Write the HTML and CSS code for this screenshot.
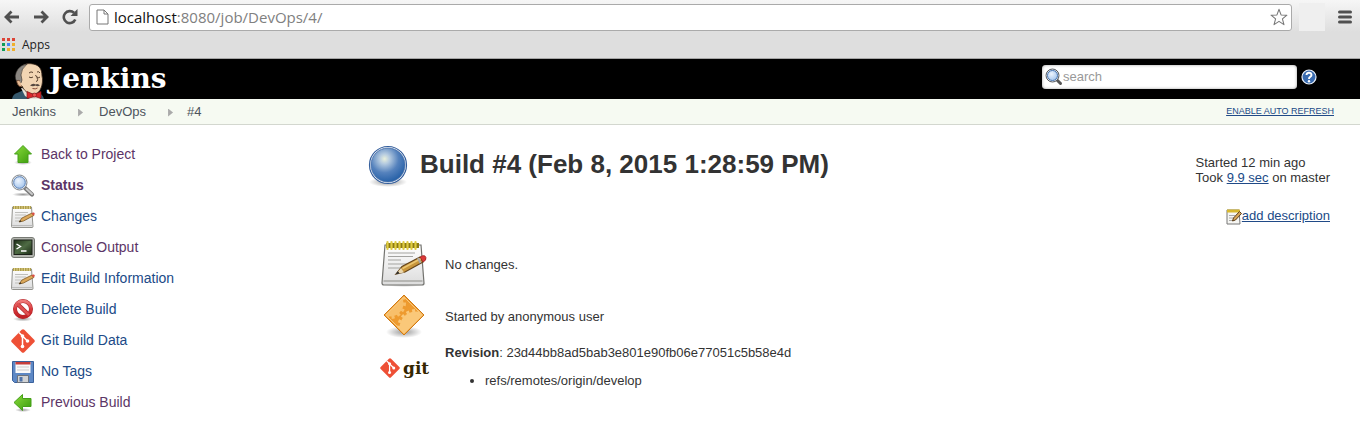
FILE: index.html
```html
<!DOCTYPE html>
<html lang="en">
<head>
<meta charset="utf-8">
<title>DevOps #4 [Jenkins]</title>
<link rel="stylesheet" href="styles.css">
</head>
<body>
<svg class="defs" aria-hidden="true">
  <defs>
    <linearGradient id="paper" x1="0" y1="0" x2="0" y2="1"><stop offset="0" stop-color="#fff"/><stop offset="1" stop-color="#dcdcdc"/></linearGradient>
    <linearGradient id="green" x1="0" y1="0" x2="1" y2="1"><stop offset="0" stop-color="#8bdc3c"/><stop offset="1" stop-color="#3a9a0c"/></linearGradient>
    <linearGradient id="red" x1="0" y1="0" x2="0" y2="1"><stop offset="0" stop-color="#ef7b7b"/><stop offset=".5" stop-color="#d83a3c"/><stop offset="1" stop-color="#c02026"/></linearGradient>
    <linearGradient id="screen" x1="0" y1="0" x2="1" y2="1"><stop offset="0" stop-color="#1f3018"/><stop offset=".5" stop-color="#4e6b44"/><stop offset="1" stop-color="#1c2c16"/></linearGradient>
    <linearGradient id="orange" x1="0" y1="0" x2="1" y2="1"><stop offset="0" stop-color="#ec9626"/><stop offset="1" stop-color="#f0a03a"/></linearGradient>
    <radialGradient id="ball" cx=".4" cy=".32" r=".68"><stop offset="0" stop-color="#e9f0dc"/><stop offset=".22" stop-color="#b4cae0"/><stop offset=".6" stop-color="#5582bd"/><stop offset="1" stop-color="#2862a8"/></radialGradient>
    <radialGradient id="glass" cx=".4" cy=".35" r=".7"><stop offset="0" stop-color="#eef5fe"/><stop offset="1" stop-color="#a3c4ec"/></radialGradient>
    <radialGradient id="shade"><stop offset="0" stop-color="#000" stop-opacity=".4"/><stop offset="1" stop-color="#000" stop-opacity="0"/></radialGradient>
    <clipPath id="diamond"><path d="M24 4l19 19-19 19L5 23z"/></clipPath>
    <symbol id="notepad" viewBox="0 0 48 48">
      <ellipse cx="24" cy="44" rx="23" ry="3" fill="url(#shade)"/>
      <path d="M5 5h36l3 38q0 2-2 2H4q-2 0-2-2z" fill="url(#paper)" stroke="#73736f" stroke-width="1.2"/>
      <path d="M3.500 41h39" stroke="#b6b6b3" stroke-width="2"/>
      <path d="M8 13h27M8 16.500h25M8 20h13M8 24h24M8 28h18" stroke="#a3a3a0" stroke-width="1.200"/>
      <path d="M6 5.500h33" stroke="#8c7a14" stroke-width="5"/>
      <path d="M7.500 2v7M11.500 2v7M15.500 2v7M19.500 2v7M23.500 2v7M27.500 2v7M31.500 2v7M35.500 2v7" stroke="#dfcc42" stroke-width="2.200" stroke-linecap="round"/>
      <path d="M16 34l6-7.500L40 17l3 5-18 10z" fill="#c9963c" stroke="#65441a" stroke-width="1.200"/>
      <path d="M22.500 28.500L41 18.500" stroke="#ecc670" stroke-width="1.500"/>
      <path d="M16 34l5-6 3 4.500z" fill="#ead7ae"/><path d="M15.500 34.300l2.500-3 1.500 2.300z" fill="#222"/>
      <path d="M40 17l2.500-1.300q3-.7 3.500 2t-3 4.300z" fill="#dd3939" stroke="#972020" stroke-width=".7"/>
      <path d="M38 18l2.500 5" stroke="#aaa" stroke-width="2"/>
    </symbol>
    <symbol id="notepad-small" viewBox="0 0 24 24">
      <path d="M1.500 2h19l1.500 19.500q0 1-1 1H1.500q-1 0-1-1z" fill="url(#paper)" stroke="#92928d"/>
      <path d="M1 20.500h20.500" stroke="#bbb"/>
      <path d="M4 7.500h13M4 10h11M4 13h7M4 16h6" stroke="#bfbfbb"/>
      <path d="M2 2.500h18" stroke="#ae9d4b" stroke-width="3"/>
      <path d="M3.500 1v3M6 1v3M8.500 1v3M11 1v3M13.500 1v3M16 1v3M18.500 1v3" stroke="#ddd08c"/>
      <path d="M8 17l3-4 10-5 1.800 2.500L12.500 16z" fill="#dca95b" stroke="#7e5620" stroke-width=".8"/>
      <path d="M20.500 8.200l1.500-.6q1.500-.3 1.700 1t-1.400 2z" fill="#d95047"/>
      <path d="M8 17l1.500-1.800.9 1.200z" fill="#222"/>
    </symbol>
    <symbol id="magnifier" viewBox="0 0 24 24">
      <ellipse cx="12" cy="20.500" rx="11" ry="2" fill="url(#shade)"/>
      <path d="M14 14l7 6.500" stroke="#777" stroke-width="4.200" stroke-linecap="round"/>
      <path d="M15.500 15l5.500 5" stroke="#c9c9c9" stroke-width="2" stroke-linecap="round"/>
      <circle cx="8.500" cy="8.500" r="7.500" fill="#e1e4e7" stroke="#83888e"/>
      <circle cx="8.500" cy="8.500" r="5.800" fill="url(#glass)" stroke="#5b83bb"/>
    </symbol>
    <symbol id="git-mark" viewBox="0 0 24 24">
      <path d="M10.700.8q1.300-1.200 2.600 0l9.900 9.900q1.200 1.300 0 2.600l-9.900 9.900q-1.300 1.200-2.600 0L.8 13.300q-1.200-1.300 0-2.600z" fill="#ee5036"/>
      <path d="M8 3.500l3.500 3.500v10.500M11.500 7l5 5" fill="none" stroke="#fff" stroke-width="1.500"/>
      <circle cx="11.500" cy="7" r="1.800" fill="#fff"/><circle cx="16.500" cy="12" r="1.800" fill="#fff"/><circle cx="11.500" cy="17.500" r="1.800" fill="#fff"/>
    </symbol>
  </defs>
</svg>

<div class="browser">
  <div class="toolbar">
    <button class="tool" aria-label="Back"><svg width="16" height="14" viewBox="0 0 16 14"><path d="M15 7H2.500M7.500 1.500L2 7l5.500 5.500" fill="none" stroke="#505050" stroke-width="2.800"/></svg></button>
    <button class="tool" aria-label="Forward"><svg width="16" height="14" viewBox="0 0 16 14"><path d="M1 7h12.500M8.500 1.500L14 7l-5.500 5.500" fill="none" stroke="#505050" stroke-width="2.800"/></svg></button>
    <button class="tool" aria-label="Reload"><svg width="16" height="16" viewBox="0 0 16 16"><path d="M13.300 10.500A6 6 0 1 1 12 3.800" fill="none" stroke="#505050" stroke-width="2.600"/><path d="M15.500 0v7h-7z" fill="#505050"/></svg></button>
    <label class="address">
      <svg width="13" height="16" viewBox="0 0 13 16"><path d="M1 1h7l4 4v10H1zM8 1v4h4" fill="#fff" stroke="#777"/></svg>
      <span class="url" role="textbox" aria-label="Address"><b>localhost</b>:8080/job/DevOps/4/</span>
      <svg width="18" height="18" viewBox="0 0 20 20"><path d="M10 1.500l2.300 6.200 6.500.3-5 4.100 1.700 6.400-5.500-3.600-5.500 3.600 1.700-6.400-5-4.100 6.500-.3z" fill="#fff" stroke="#777" stroke-width="1.200" stroke-linejoin="round"/></svg>
    </label>
    <span class="extension"></span>
    <button class="tool" aria-label="Menu"><svg width="14" height="14" viewBox="0 0 14 14"><path d="M1.500 2h11M1.500 7h11M1.500 12h11" stroke="#505050" stroke-width="3" stroke-linecap="round"/></svg></button>
  </div>
  <div class="bookmarks">
    <a class="apps" href="#apps">
      <svg width="14" height="14" viewBox="0 0 14 14"><path d="M0 0h3v3H0zM5 0h3v3H5zM10 0h3v3h-3z" fill="#dc4437"/><path d="M0 5h3v3H0zM0 10h3v3H0z" fill="#0f9d58"/><path d="M5 5h3v3H5z" fill="#4285f4"/><path d="M10 5h3v3h-3zM5 10h3v3H5zM10 10h3v3h-3z" fill="#efb02e"/></svg>
      Apps</a>
  </div>
</div>

<header class="header">
  <a class="logo" href="#home">
    <svg width="33" height="36" viewBox="0 0 33 36">
      <path d="M0 36q1-5 5-6l7-3 13 2q6 2 7 7z" fill="#35586c"/>
      <path d="M9 25l4 8 5 3h10l-1-5-4-4z" fill="#e9e2d8"/>
      <path d="M6 14C5 4 12 0 19 .7c8 .6 11 5 11 12.300 1 3 .5 9-1 12-1.500 4-4 6-8 6-6 0-9-4-11-8q-4-2-5-5z" fill="#f2d5b3" stroke="#39271b" stroke-width=".8"/>
      <path d="M5 19Q1 13 6 6q3-4 9-5-6 5-6 11l1 5-1 3q-2-3-4-1z" fill="#8a8681" stroke="#302c29" stroke-width=".6"/>
      <path d="M8 18q-4-2-3 2t5 4" fill="#e5b993" stroke="#57321c" stroke-width=".8"/>
      <path d="M17 10q2-2 4-.5M25 9q2-1 3 1M17 14q2 1.500 4 0M25 14q2 1.500 3 0M23.500 12q4 6 .5 6.500" fill="none" stroke="#453020" stroke-width=".9"/>
      <path d="M18 22.500q3-3 5.500-1 2.500-1.500 4.500 1-2.500 1.500-4.500 0-2.500 1.500-5.500 0z" fill="#544740"/>
      <path d="M20.500 25.500q3 1 5-.5" fill="none" stroke="#874a38"/>
      <path d="M15 28.500l7 3 7-3v7l-6-2-8 2z" fill="#d9282c" stroke="#7b1719" stroke-width=".7"/><circle cx="22.500" cy="32" r="2" fill="#ef5552" stroke="#7b1719" stroke-width=".6"/>
    </svg>
    <span class="wordmark">Jenkins</span>
  </a>
  <form class="search">
    <label class="search-box"><svg width="18" height="18" viewBox="0 0 18 18"><path d="M11 11l4.500 4.500" stroke="#555" stroke-width="3" stroke-linecap="round"/><circle cx="7.500" cy="7.500" r="6.500" fill="#dee3e8" stroke="#565b62"/><circle cx="7.500" cy="7.500" r="5" fill="url(#glass)" stroke="#4b78b5"/></svg><input type="search" placeholder="search" aria-label="Search"></label>
    <a class="help" href="#help" aria-label="Help"><svg width="16" height="16" viewBox="0 0 16 16"><circle cx="8" cy="8" r="7" fill="#396bb0" stroke="#e9f0fa" stroke-width="1.200"/><path d="M5.500 6q.2-2.300 2.500-2.300T10.500 6q0 1.200-1.300 1.900T8 10" fill="none" stroke="#fff" stroke-width="1.900"/><circle cx="8" cy="12.200" r="1.200" fill="#fff"/></svg></a>
  </form>
</header>

<nav class="crumbs" aria-label="Breadcrumb">
  <a href="#jenkins">Jenkins</a><i class="arrow"></i><a href="#devops">DevOps</a><i class="arrow"></i><a href="#build">#4</a>
  <a class="refresh" href="#refresh">ENABLE AUTO REFRESH</a>
</nav>

<div class="page">
  <nav class="tasks" aria-label="Build tasks">
    <a class="seen" href="#project"><svg viewBox="0 0 24 24"><ellipse cx="12" cy="19.500" rx="9" ry="2.500" fill="url(#shade)"/><path d="M12 2.500l8.500 8.500H17v8.500H7V11H3.500z" fill="url(#green)" stroke="#45a018"/></svg>Back to Project</a>
    <a class="seen current" href="#status"><svg><use href="#magnifier"/></svg>Status</a>
    <a href="#changes"><svg><use href="#notepad-small"/></svg>Changes</a>
    <a class="seen" href="#console"><svg viewBox="0 0 24 24"><rect x=".5" y="1.500" width="23" height="20" rx="2.500" fill="#b4b6b0" stroke="#777a74"/><rect x="3" y="4" width="18" height="14.500" fill="url(#screen)" stroke="#1b2118"/><path d="M5.500 8l4 2.500-4 2.500M10 15h5.500" fill="none" stroke="#fff" stroke-width="1.400"/></svg>Console Output</a>
    <a href="#edit"><svg><use href="#notepad-small"/></svg>Edit Build Information</a>
    <a href="#delete"><svg viewBox="0 0 24 24"><ellipse cx="12" cy="21" rx="10" ry="2.500" fill="url(#shade)"/><circle cx="12" cy="11" r="8" fill="#fff" stroke="#b3262a" stroke-width="4"/><path d="M6 5.500L18 17" stroke="#b3262a" stroke-width="4"/><circle cx="12" cy="11" r="8" fill="none" stroke="url(#red)" stroke-width="2.800"/><path d="M6 5.500L18 17" stroke="#df5152" stroke-width="2.600"/></svg>Delete Build</a>
    <a href="#git"><svg><use href="#git-mark"/></svg>Git Build Data</a>
    <a href="#tags"><svg viewBox="0 0 24 24"><path d="M1.500 1.500h21v21h-19l-2-2z" fill="#5d88c5" stroke="#3a619c"/><path d="M4.500 2h15v11h-15z" fill="#fafafa"/><path d="M4.500 2h15v2.500h-15z" fill="#c63e3c"/><path d="M6 7h12M6 10h12" stroke="#ccc"/><path d="M6.500 15.500h11v7h-11z" fill="#d0d2d4" stroke="#6c737c"/><path d="M8.500 17h3v4.500h-3z" fill="#4f73a9"/></svg>No Tags</a>
    <a class="seen" href="#previous"><svg viewBox="0 0 24 24"><ellipse cx="12" cy="19" rx="8" ry="2" fill="url(#shade)"/><path d="M3 11.500l8.500-8v4H20v8h-8.500v4z" fill="url(#green)" stroke="#45a018"/></svg>Previous Build</a>
  </nav>

  <main class="build">
    <div class="title-row">
      <h1><svg width="42" height="44" viewBox="0 0 42 44"><ellipse cx="20" cy="37" rx="19" ry="5" fill="url(#shade)"/><circle cx="20" cy="20" r="18.500" fill="#fff" stroke="#355f9d" stroke-width="1.200"/><circle cx="20" cy="20" r="17" fill="url(#ball)" stroke="#466fa8" stroke-width=".8"/></svg>Build #4 (Feb 8, 2015 1:28:59 PM)</h1>
      <aside class="timing">
        <p>Started 12 min ago<br>Took <a href="#trend">9.9 sec</a> on master</p>
        <a class="describe" href="#description"><svg width="16" height="16" viewBox="0 0 16 16"><path d="M1 1h12l1 14H1z" fill="#f6f6f3" stroke="#777"/><path d="M3 6.500h6M3 9h5M3 11.500h5" stroke="#aaa"/><path d="M1 2h13" stroke="#d7b82f" stroke-width="3"/><path d="M6.500 12l1-3 6-6.500 2 2-6 6.500z" fill="#d7a65a" stroke="#593c18"/></svg><span>add description</span></a>
      </aside>
    </div>
    <div class="facts">
      <svg width="48" height="48"><use href="#notepad"/></svg>
      <p>No changes.</p>
      <svg width="48" height="48" viewBox="0 0 48 48">
        <ellipse cx="24" cy="40" rx="18" ry="6" fill="url(#shade)"/>
        <path d="M24 3l20 20-20 20L4 23z" fill="url(#orange)" stroke="#cf7a16" stroke-linejoin="round"/>
        <g clip-path="url(#diamond)">
          <circle cx="10" cy="11" r="13.500" fill="#f8bf6a"/><circle cx="10" cy="11" r="14.500" fill="none" stroke="#f8bf6a" stroke-width="3" stroke-dasharray="3 3"/>
          <circle cx="36" cy="36" r="16.500" fill="#fac879"/><circle cx="36" cy="36" r="17.500" fill="none" stroke="#fac879" stroke-width="3" stroke-dasharray="3 3"/>
        </g>
        <path d="M24 5l18 18-18 18L6 23z" fill="none" stroke="#f9c87c"/>
      </svg>
      <p>Started by anonymous user</p>
      <div class="git-logo"><svg width="20" height="20"><use href="#git-mark"/></svg><span>git</span></div>
      <div class="revision">
        <p><b>Revision</b>: 23d44bb8ad5bab3e801e90fb06e77051c5b58e4d</p>
        <ul><li>refs/remotes/origin/develop</li></ul>
      </div>
    </div>
  </main>
</div>
</body>
</html>
```

FILE: styles.css
```css
* { box-sizing: border-box; }
body { margin: 0; background: #fff; color: #333; font: 13px/15px "Liberation Sans", Arial, sans-serif; }
p, h1, ul { margin: 0; }
svg { display: block; flex: none; }
a { color: #204a87; }
.defs { position: absolute; width: 0; height: 0; }

.browser { background: linear-gradient(#f6f6f6, #dedede 32px); border-bottom: 1px solid #a5a5a5; }
.toolbar { display: flex; align-items: center; gap: 13px; padding: 3px 8px 0 4px; }
.tool { display: flex; padding: 0; border: 0; background: none; }
.address { display: flex; flex: 1; align-items: center; gap: 5px; height: 27px; margin-left: -2px; padding: 0 3px 0 6px; border: 1px solid #aaa; border-radius: 3px; background: #fff; }
.url { flex: 1; color: #808080; font: 15px/24px "Open Sans", "Noto Sans", sans-serif; }
.url b { color: #111; font-weight: 400; }
.extension { width: 26px; height: 28px; margin-left: -6px; background: #efefef; }
.bookmarks { display: flex; align-items: center; height: 27px; padding-left: 2px; }
.apps { display: flex; align-items: center; gap: 6px; color: #222; font: 12px/16px "Open Sans", "Noto Sans", sans-serif; text-decoration: none; }

.header { display: flex; justify-content: space-between; align-items: flex-start; height: 40px; padding: 0 43px 0 12px; background: #000; }
.logo { display: flex; align-items: flex-end; gap: 4px; height: 40px; color: #fff; text-decoration: none; }
.wordmark { font: bold 28px/40px "DejaVu Serif", Georgia, serif; }
.search { display: flex; align-items: center; gap: 4px; padding-top: 6px; }
.search-box { display: flex; align-items: center; width: 255px; height: 24px; padding: 0 3px; border-radius: 4px; background: #fff; box-shadow: inset 0 0 3px #999; }
.search-box input { flex: 1; min-width: 0; padding: 0; border: 0; outline: 0; background: none; font: 13px/18px "Liberation Sans", Arial, sans-serif; }
.search-box input::placeholder { color: #999; }

.crumbs { display: flex; align-items: center; height: 26px; padding: 0 26px 0 12px; border-bottom: 1px solid #d3d7cf; background: #f6faf2; }
.crumbs a { color: #4d545d; text-decoration: none; }
.arrow { width: 5px; height: 8px; margin: 2px 14px 0 22px; background: #aaa; clip-path: polygon(0 0, 100% 50%, 0 100%); }
.arrow:first-of-type { margin-right: 16px; }
.crumbs .refresh { margin-left: auto; color: #204a87; font-size: 9px; text-decoration: underline; }

.page { display: flex; align-items: flex-start; padding: 14px 30px 12px 11px; }
.tasks { display: flex; flex-direction: column; flex: none; width: 357px; }
.tasks a { display: flex; align-items: center; gap: 6px; height: 31px; font-size: 14px; text-decoration: none; }
.tasks svg { width: 24px; height: 24px; }
.tasks .seen { color: #5c3566; }
.tasks .current { font-weight: 700; }
.build { flex: 1; min-width: 0; }
.title-row { display: flex; justify-content: space-between; height: 101px; padding-top: 6px; }
h1 { display: flex; align-items: flex-start; gap: 10px; font-size: 26px; line-height: 38px; }
.timing { padding-top: 10px; }
.describe { display: flex; justify-content: flex-end; margin-top: 23px; }
.describe svg { margin-top: 1px; }
.facts { display: grid; grid-template-columns: 49px 1fr; gap: 4px 16px; align-items: center; padding-left: 12px; }
.git-logo { display: flex; align-items: center; gap: 3px; padding-top: 4px; color: #362701; font: bold 17px/24px "DejaVu Serif", serif; }
.revision { display: flex; flex-direction: column; gap: 13px; padding-top: 1px; }
.revision ul { padding-left: 40px; }
```
